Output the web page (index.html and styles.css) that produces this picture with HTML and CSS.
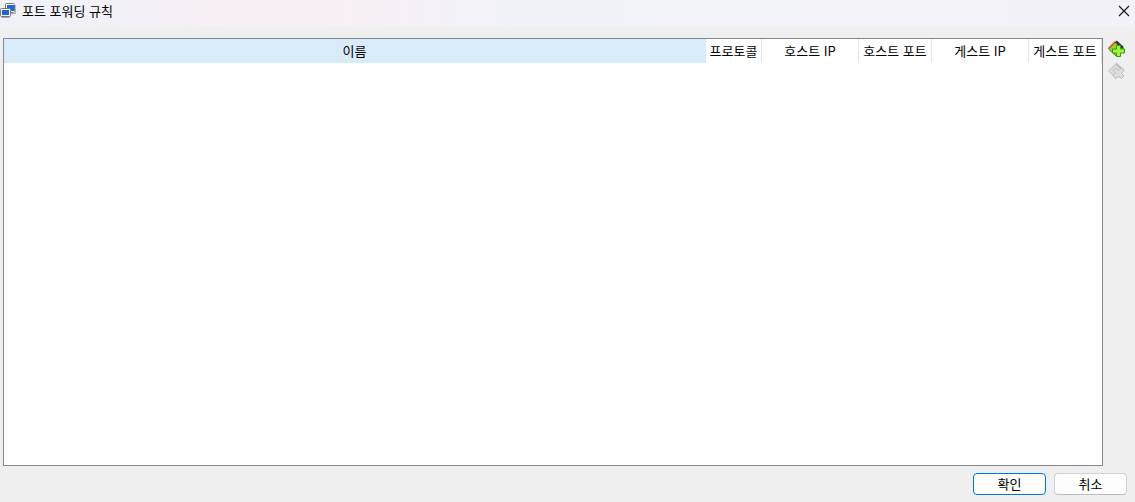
FILE: index.html
```
<!DOCTYPE html>
<html lang="ko">
<head>
    <meta charset="UTF-8">
    <meta name="viewport" content="width=device-width, initial-scale=1.0">
    <title>포트 포워딩 규칙</title>
    <link rel="stylesheet" href="styles.css">
</head>
<body>
    <header class="title-bar">
        <svg class="app-icon" width="16" height="20" viewBox="0 0 16 20">
            <path d="M11 13h4V5h1v9h-5z" fill="#b5b5bb"/>
            <rect x="5.500" y="3.500" width="9" height="9" rx="1" fill="#fff" stroke="#77787d"/>
            <rect x="7" y="5" width="7" height="6" fill="#1d68cf"/>
            <path d="M2 17h7l1 1H1z" fill="#a5a5ab"/>
            <rect x="0.500" y="8.500" width="10" height="8" rx="1" fill="#fff" stroke="#77787d"/>
            <rect x="2" y="10" width="7" height="5" fill="#1d68cf"/>
        </svg>
        <h1 class="title">포트 포워딩 규칙</h1>
        <button class="close-button" type="button" aria-label="닫기">
            <svg width="12" height="12" viewBox="0 0 12 12">
                <path d="M1 1l10 10M11 1L1 11" fill="none" stroke="#1a1a1a" stroke-width="1.2"/>
            </svg>
        </button>
    </header>

    <main class="content">
        <div class="table-panel">
            <table class="rules-table">
                <colgroup>
                    <col>
                    <col class="col-protocol">
                    <col class="col-ip">
                    <col class="col-port">
                    <col class="col-ip">
                    <col class="col-port">
                </colgroup>
                <thead>
                    <tr>
                        <th class="selected">이름</th>
                        <th>프로토콜</th>
                        <th>호스트 IP</th>
                        <th>호스트 포트</th>
                        <th>게스트 IP</th>
                        <th>게스트 포트</th>
                    </tr>
                </thead>
                <tbody></tbody>
            </table>
        </div>

        <div class="toolbar">
            <button class="tool-button" type="button" aria-label="규칙 추가">
                <svg width="18" height="18" viewBox="0 0 18 18">
                    <path d="M9 1.500l7.500 7L9 16 1.500 9z" fill="#8fd32a" stroke="#5c7f24"/>
                    <path d="M1.500 8.500L8.500 1.500" stroke="#e0492c" stroke-width="1.500"/>
                    <path d="M9 1.500l7 6.500" stroke="#30343a" stroke-width="2.500"/>
                    <path d="M9.500 5.500h4v3.500h4v4h-4v3.500h-4v-3.500h-4v-4h4z" fill="#9df53c" stroke="#349a18"/>
                </svg>
            </button>
            <button class="tool-button" type="button" aria-label="규칙 삭제" disabled>
                <svg width="18" height="18" viewBox="0 0 18 18">
                    <path d="M9 1.500l7.500 7L9 16 1.500 9z" fill="#dcdcdc" stroke="#c2c2c2"/>
                    <path d="M9 1.500l7 6.500" stroke="#bdbdbd" stroke-width="2"/>
                    <path d="M8.500 6l3 2.500 3-2.500 2.500 2.500-2.500 3 2.500 2.500-2.500 2.500-3-2-3 2L6 13.500 8.500 11 6 8.500z" fill="#dedede" stroke="#bababa"/>
                </svg>
            </button>
        </div>
    </main>

    <footer class="actions">
        <button class="action-button default" type="button">확인</button>
        <button class="action-button" type="button">취소</button>
    </footer>
</body>
</html>
```
FILE: styles.css
```
* {
    box-sizing: border-box;
}
body {
    margin: 0;
    min-height: 100vh;
    display: flex;
    flex-direction: column;
    background: #efefef;
    color: #000;
    font-family: "Noto Sans CJK KR", sans-serif;
    font-size: 13px;
    line-height: 20px;
}
button {
    font: inherit;
    color: inherit;
}
.title-bar {
    display: flex;
    align-items: flex-start;
    gap: 6px;
    height: 27px;
    padding-right: 5px;
    background: linear-gradient(90deg, #f0f2f9 0%, #f3f0f7 12%, #f7eff4 20%, #f7eff4 29%, #f1f2f8 44%, #f2f1f8 100%);
}
.app-icon {
    flex: none;
}
.title {
    flex: 1;
    margin: 1px 0 0;
    font-size: 13px;
    font-weight: normal;
}
.close-button,
.tool-button {
    display: flex;
    padding: 0;
    border: none;
    background: none;
}
.close-button {
    margin-top: 5px;
}
.content {
    flex: 1;
    display: flex;
    gap: 4px;
    padding: 11px 10px 0 3px;
}
.table-panel {
    flex: 1;
    border: 1px solid #828790;
    background: #fff;
}
.rules-table {
    width: 100%;
    table-layout: fixed;
    border-collapse: separate;
    border-spacing: 0;
}
.col-protocol {
    width: 56px;
}
.col-ip {
    width: 97px;
}
.col-port {
    width: 73px;
}
.rules-table th {
    height: 24px;
    padding: 0;
    border-right: 1px solid #e5e5e5;
    font-weight: normal;
    line-height: 24px;
    text-align: center;
    white-space: nowrap;
}
.rules-table th.selected {
    border-right-color: #d9ebf9;
    background: #d9ebf9;
}
.toolbar {
    display: flex;
    flex-direction: column;
    gap: 4px;
    padding-top: 2px;
}
.actions {
    display: flex;
    justify-content: flex-end;
    gap: 8px;
    padding: 7px 8px;
}
.action-button {
    width: 73px;
    height: 22px;
    padding: 0;
    border: 1px solid #d0d0d0;
    border-bottom-color: #bcbcbc;
    border-radius: 4px;
    background: #fdfdfd;
}
.action-button.default {
    border-color: #0078d4;
}
```
